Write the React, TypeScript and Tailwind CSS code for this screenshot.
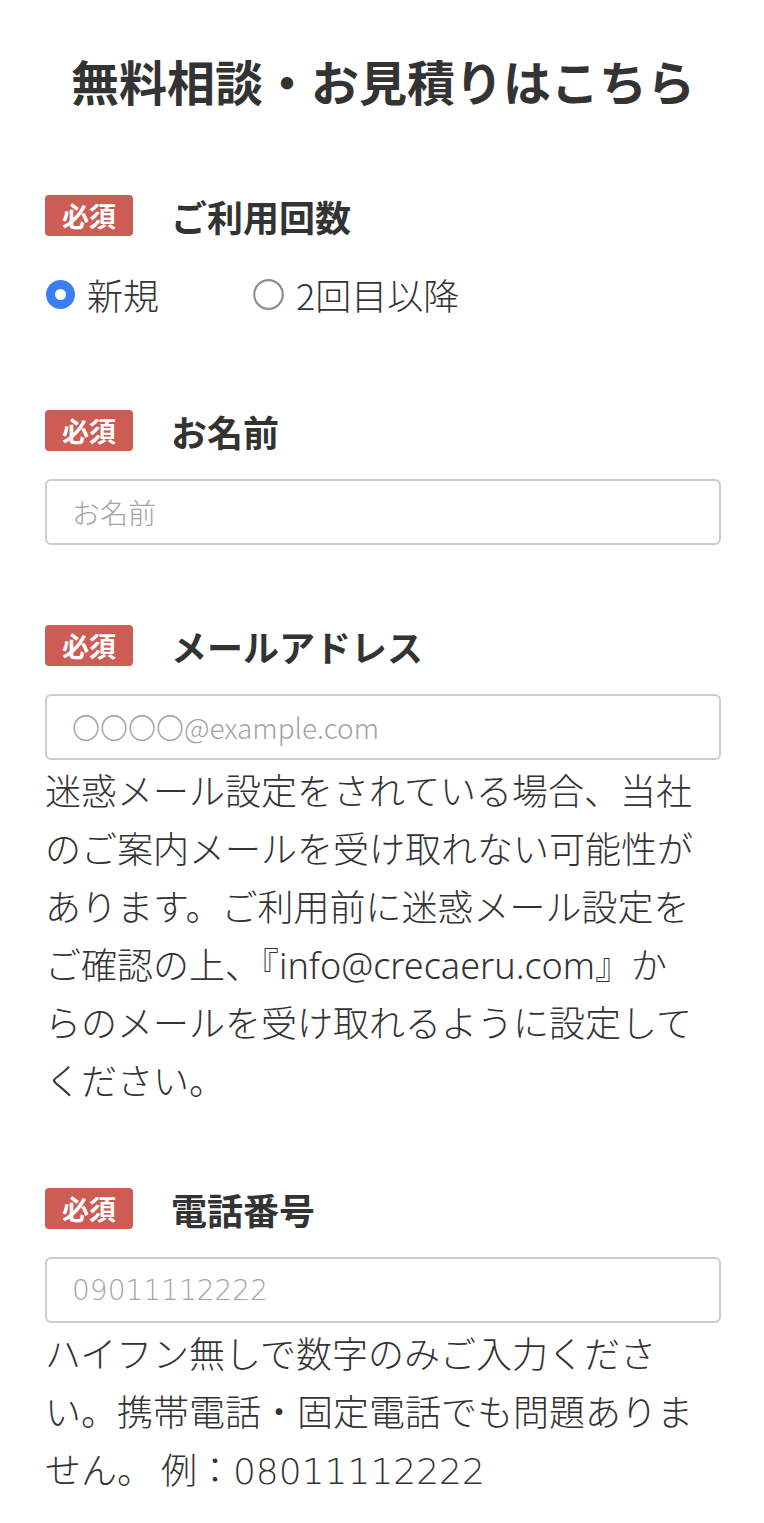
import React from "react";

function Badge() {
  return (
    <div className="flex h-[41px] w-[88px] shrink-0 items-center justify-center rounded-[4px] bg-[#cd5c55] text-[27px] font-bold leading-none text-white">
      必須
    </div>
  );
}

function Header({ label }: { label: string }) {
  return (
    <div className="flex items-center">
      <Badge />
      <div className="ml-[38px] text-[36px] font-bold leading-none text-[#333333]">{label}</div>
    </div>
  );
}

function Field({ placeholder, digits }: { placeholder: string; digits?: boolean }) {
  return (
    <input
      type="text"
      placeholder={placeholder}
      className={
        digits
          ? "mt-[28px] block h-[66px] w-full rounded-[6px] border-2 border-[#cccccc] bg-white pl-[25px] font-['DejaVu_Sans','Noto_Sans_CJK_JP',sans-serif] text-[28px] font-light text-[#333333] outline-none placeholder:text-[#a3a3a3]"
          : "mt-[28px] block h-[66px] w-full rounded-[6px] border-2 border-[#cccccc] bg-white pl-[25px] text-[28px] font-light text-[#333333] outline-none placeholder:text-[#a3a3a3]"
      }
    />
  );
}

export default function App() {
  return (
    <div className="min-h-[1523px] w-[764px] bg-white pl-[45px] pr-[43px] font-['Noto_Sans_CJK_JP','Noto_Sans',sans-serif] text-[#333333]">
      <h1 className="pt-[56px] text-center text-[48px] font-bold leading-[48px] text-[#333333]">
        無料相談・お見積りはこちら
      </h1>

      <section className="mt-[91px]">
        <Header label="ご利用回数" />
        <div className="mt-[29px] flex h-[58px] items-center text-[36px] font-light leading-none">
          <label className="flex items-center">
            <svg width="29" height="29" viewBox="0 0 29 29" className="ml-[1px] shrink-0">
              <circle cx="14.5" cy="14.5" r="14.5" fill="#3b7ef2" />
              <circle cx="14.5" cy="14.5" r="5.5" fill="#ffffff" />
            </svg>
            <span className="ml-[12px]">新規</span>
          </label>
          <label className="ml-[94px] flex items-center">
            <svg width="31" height="31" viewBox="0 0 31 31" className="shrink-0">
              <circle cx="15.5" cy="15.5" r="14.3" fill="none" stroke="#8f8f8f" strokeWidth="2.2" />
            </svg>
            <span className="ml-[12px]">2回目以降</span>
          </label>
        </div>
      </section>

      <section className="mt-[87px]">
        <Header label="お名前" />
        <Field placeholder="お名前" />
      </section>

      <section className="mt-[80px]">
        <Header label="メールアドレス" />
        <Field placeholder="〇〇〇〇@example.com" />
        <p className="text-[36px] font-light leading-[58px] text-[#333333]">
          迷惑メール設定をされている場合、当社
          <br />
          のご案内メールを受け取れない可能性が
          <br />
          あります。ご利用前に迷惑メール設定を
          <br />
          ご確認の上、『<span className="font-['Noto_Sans','Noto_Sans_CJK_JP',sans-serif] font-light leading-none">info@crecaeru.com</span>』か
          <br />
          らのメールを受け取れるように設定して
          <br />
          ください。
        </p>
      </section>

      <section className="mt-[80px]">
        <Header label="電話番号" />
        <Field placeholder="09011112222" digits />
        <p className="text-[36px] font-light leading-[58px] text-[#333333]">
          ハイフン無しで数字のみご入力くださ
          <br />
          い。携帯電話・固定電話でも問題ありま
          <br />
          せん。 例：<span className="font-['DejaVu_Sans','Noto_Sans_CJK_JP',sans-serif] font-light leading-none">08011112222</span>
        </p>
      </section>
    </div>
  );
}
